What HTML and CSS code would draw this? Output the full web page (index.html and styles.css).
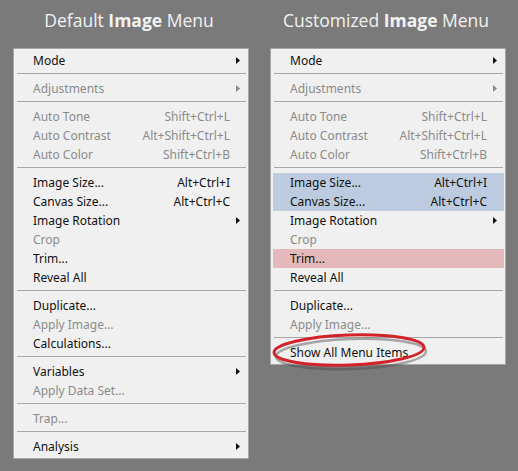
FILE: index.html
```html
<!DOCTYPE html>
<html>
<head>
<meta charset="utf-8">
<link rel="stylesheet" href="styles.css">
</head>
<body>
<div class="page">
  <section class="col">
    <h1 class="title">Default <b>Image</b> Menu</h1>
    <div class="menu">
      <div class="row"><span class="label">Mode</span><svg class="arrow" viewBox="0 0 4 7"><polygon points="0,0 4,3.5 0,7"/></svg></div>
      <div class="sep"></div>
      <div class="row off"><span class="label">Adjustments</span><svg class="arrow" viewBox="0 0 4 7"><polygon points="0,0 4,3.5 0,7"/></svg></div>
      <div class="sep"></div>
      <div class="row off"><span class="label">Auto Tone</span><span class="key">Shift+Ctrl+L</span></div>
      <div class="row off"><span class="label">Auto Contrast</span><span class="key">Alt+Shift+Ctrl+L</span></div>
      <div class="row off"><span class="label">Auto Color</span><span class="key">Shift+Ctrl+B</span></div>
      <div class="sep"></div>
      <div class="row"><span class="label">Image Size...</span><span class="key">Alt+Ctrl+I</span></div>
      <div class="row"><span class="label">Canvas Size...</span><span class="key">Alt+Ctrl+C</span></div>
      <div class="row"><span class="label">Image Rotation</span><svg class="arrow" viewBox="0 0 4 7"><polygon points="0,0 4,3.5 0,7"/></svg></div>
      <div class="row off"><span class="label">Crop</span></div>
      <div class="row"><span class="label">Trim...</span></div>
      <div class="row"><span class="label">Reveal All</span></div>
      <div class="sep"></div>
      <div class="row"><span class="label">Duplicate...</span></div>
      <div class="row off"><span class="label">Apply Image...</span></div>
      <div class="row"><span class="label">Calculations...</span></div>
      <div class="sep"></div>
      <div class="row"><span class="label">Variables</span><svg class="arrow" viewBox="0 0 4 7"><polygon points="0,0 4,3.5 0,7"/></svg></div>
      <div class="row off"><span class="label">Apply Data Set...</span></div>
      <div class="sep"></div>
      <div class="row off"><span class="label">Trap...</span></div>
      <div class="sep"></div>
      <div class="row"><span class="label">Analysis</span><svg class="arrow" viewBox="0 0 4 7"><polygon points="0,0 4,3.5 0,7"/></svg></div>
    </div>
  </section>
  <section class="col">
    <h1 class="title">Customized <b>Image</b> Menu</h1>
    <div class="menu custom">
      <div class="row"><span class="label">Mode</span><svg class="arrow" viewBox="0 0 4 7"><polygon points="0,0 4,3.5 0,7"/></svg></div>
      <div class="sep"></div>
      <div class="row off"><span class="label">Adjustments</span><svg class="arrow" viewBox="0 0 4 7"><polygon points="0,0 4,3.5 0,7"/></svg></div>
      <div class="sep"></div>
      <div class="row off"><span class="label">Auto Tone</span><span class="key">Shift+Ctrl+L</span></div>
      <div class="row off"><span class="label">Auto Contrast</span><span class="key">Alt+Shift+Ctrl+L</span></div>
      <div class="row off"><span class="label">Auto Color</span><span class="key">Shift+Ctrl+B</span></div>
      <div class="sep"></div>
      <div class="row blue"><span class="label">Image Size...</span><span class="key">Alt+Ctrl+I</span></div>
      <div class="row blue"><span class="label">Canvas Size...</span><span class="key">Alt+Ctrl+C</span></div>
      <div class="row"><span class="label">Image Rotation</span><svg class="arrow" viewBox="0 0 4 7"><polygon points="0,0 4,3.5 0,7"/></svg></div>
      <div class="row off"><span class="label">Crop</span></div>
      <div class="row red"><span class="label">Trim...</span></div>
      <div class="row"><span class="label">Reveal All</span></div>
      <div class="sep"></div>
      <div class="row"><span class="label">Duplicate...</span></div>
      <div class="row off"><span class="label">Apply Image...</span></div>
      <div class="sep"></div>
      <div class="row"><span class="label">Show All Menu Items</span></div>
      <svg class="circle" viewBox="0 0 160 40" width="160" height="40">
        <ellipse class="shadow" cx="80" cy="21" rx="75" ry="15" transform="rotate(-2 80 21)"/>
        <ellipse class="ring" cx="78" cy="17" rx="75" ry="15" transform="rotate(-2 78 17)"/>
      </svg>
    </div>
  </section>
</div>
</body>
</html>
```

FILE: styles.css
```css
html, body {
  margin: 0;
  padding: 0;
}
body {
  background: #7a7a7a;
  width: 518px;
  height: 471px;
  overflow: hidden;
}
.page {
  display: flex;
  gap: 21px;
  padding-left: 13px;
}
.col {
  width: 236px;
  display: flex;
  flex-direction: column;
}
.title {
  margin: 0;
  height: 24px;
  padding: 8px 0 16px;
  font-family: "Open Sans", "Noto Sans", sans-serif;
  font-size: 17.5px;
  font-weight: 400;
  line-height: 24px;
  color: #f2f2f2;
  text-align: center;
  white-space: nowrap;
  margin-left: -4px;
}
.title b {
  font-weight: 700;
}
.menu {
  position: relative;
  box-sizing: border-box;
  width: 236px;
  background: #f0f0f0;
  border: 1px solid #a6a6a6;
  padding: 2px 0;
  font-family: "Noto Sans", "Open Sans", sans-serif;
  font-size: 12px;
  color: #111;
}
.row {
  display: flex;
  align-items: center;
  height: 19px;
  margin: 0 1px 0 2px;
  padding: 0 17px 0 17px;
  white-space: nowrap;
}
.row .label {
  flex: 1;
}
.row .key {
  text-align: right;
}
.row.off {
  color: #8b8b8b;
}
.arrow {
  width: 4px;
  height: 7px;
  margin-right: -10px;
  fill: #111;
}
.row.off .arrow {
  fill: #8b8b8b;
}
.sep {
  height: 1px;
  background: #a8a8a8;
  margin: 3px 2px 5px 3px;
}
.row.blue {
  background: #bccbe0;
}
.row.red {
  background: #e4b9bb;
}
.circle {
  position: absolute;
  left: 0;
  top: 284px;
  overflow: visible;
}
.ring {
  fill: none;
  stroke: #d2232b;
  stroke-width: 3px;
}
.shadow {
  fill: none;
  stroke: #4a4a4a;
  stroke-width: 2.5px;
  opacity: 0.45;
}
```
